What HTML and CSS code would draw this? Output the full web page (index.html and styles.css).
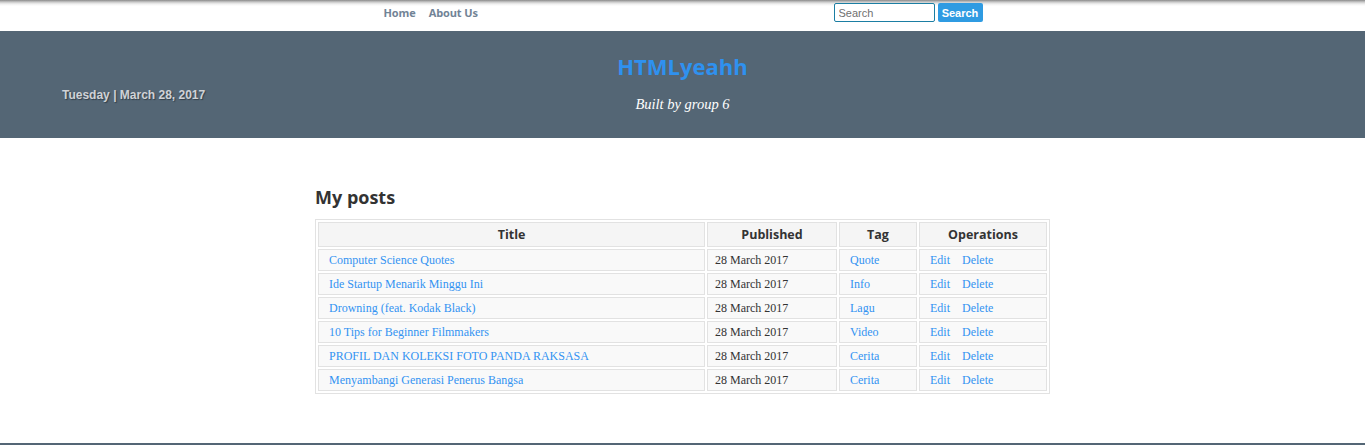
FILE: index.html
```html
<!DOCTYPE html>
<html>
<head>
<meta charset="utf-8">
<title>HTMLyeahh</title>
<link rel="stylesheet" href="styles.css">
</head>
<body>
<nav class="topbar">
  <div class="topbar-inner">
    <ul class="menu">
      <li><a href="#">Home</a></li>
      <li><a href="#">About Us</a></li>
    </ul>
    <form class="search">
      <input class="search-input" type="text" placeholder="Search">
      <button class="search-btn" type="button">Search</button>
    </form>
  </div>
</nav>
<header class="masthead">
  <div class="date">Tuesday | March 28, 2017</div>
  <div class="brand">
    <h1 class="site-title">HTMLyeahh</h1>
    <p class="tagline">Built by group 6</p>
  </div>
  <div></div>
</header>
<main class="content">
  <h2 class="page-title">My posts</h2>
  <table class="posts">
    <colgroup>
      <col class="c-title"><col class="c-pub"><col class="c-tag"><col class="c-ops">
    </colgroup>
    <thead>
      <tr><th>Title</th><th>Published</th><th>Tag</th><th>Operations</th></tr>
    </thead>
    <tbody>
      <tr><td><a href="#">Computer Science Quotes</a></td><td class="pub">28 March 2017</td><td><a href="#">Quote</a></td><td class="ops"><a href="#">Edit</a><a href="#">Delete</a></td></tr>
      <tr><td><a href="#">Ide Startup Menarik Minggu Ini</a></td><td class="pub">28 March 2017</td><td><a href="#">Info</a></td><td class="ops"><a href="#">Edit</a><a href="#">Delete</a></td></tr>
      <tr><td><a href="#">Drowning (feat. Kodak Black)</a></td><td class="pub">28 March 2017</td><td><a href="#">Lagu</a></td><td class="ops"><a href="#">Edit</a><a href="#">Delete</a></td></tr>
      <tr><td><a href="#">10 Tips for Beginner Filmmakers</a></td><td class="pub">28 March 2017</td><td><a href="#">Video</a></td><td class="ops"><a href="#">Edit</a><a href="#">Delete</a></td></tr>
      <tr><td><a href="#">PROFIL DAN KOLEKSI FOTO PANDA RAKSASA</a></td><td class="pub">28 March 2017</td><td><a href="#">Cerita</a></td><td class="ops"><a href="#">Edit</a><a href="#">Delete</a></td></tr>
      <tr><td><a href="#">Menyambangi Generasi Penerus Bangsa</a></td><td class="pub">28 March 2017</td><td><a href="#">Cerita</a></td><td class="ops"><a href="#">Edit</a><a href="#">Delete</a></td></tr>
    </tbody>
  </table>
</main>
<footer class="footer"></footer>
</body>
</html>
```
FILE: styles.css
```css
* { box-sizing: border-box; }
html, body { margin: 0; padding: 0; background: #fff; }
body { font-family: "Liberation Serif", serif; color: #333; }

.topbar {
  height: 31px;
  background: linear-gradient(to bottom, #8a8a8a 0px, #c8c8c8 2px, #f0f0f0 4px, #ffffff 6px);
}
.topbar-inner {
  width: 600px;
  margin: 0 auto;
  display: flex;
  justify-content: space-between;
  align-items: flex-start;
  padding-top: 3px;
}
.menu {
  list-style: none;
  margin: 0;
  padding: 0 0 0 1px;
  display: flex;
  gap: 13px;
}
.menu a {
  font-family: "Open Sans", sans-serif;
  font-weight: 700;
  font-size: 11px;
  color: #718396;
  text-decoration: none;
  letter-spacing: -0.1px;
}
.search { display: flex; gap: 3px; margin: 0; }
.search-input {
  width: 101px;
  height: 19px;
  border: 1px solid #1b7ea3;
  border-radius: 2px;
  padding: 0 4px;
  font-family: "Liberation Sans", sans-serif;
  font-size: 11px;
  color: #333;
}
.search-input::placeholder { color: #707070; }
.search-btn {
  height: 19px;
  width: 45px;
  border: 0;
  border-radius: 2px;
  background: #2f9be2;
  color: #fff;
  font-family: "Liberation Sans", sans-serif;
  font-weight: 700;
  font-size: 11px;
  padding: 0;
}

.masthead {
  height: 107px;
  background: #546675;
  display: grid;
  grid-template-columns: 1fr auto 1fr;
}
.date {
  padding: 57px 0 0 62px;
  font-family: "Liberation Sans", sans-serif;
  font-weight: 700;
  font-size: 12px;
  color: #cfd2d6;
  text-shadow: 1px 1px 1px #33404b;
}
.brand { text-align: center; padding-top: 22px; }
.site-title {
  margin: 0;
  font-family: "Open Sans", sans-serif;
  font-weight: 700;
  font-size: 22px;
  line-height: 26px;
  color: #2f91ef;
}
.tagline {
  margin: 17px 0 0;
  font-family: "Liberation Serif", serif;
  font-style: italic;
  font-size: 14.5px;
  color: #fff;
}

.content {
  width: 735px;
  margin: 0 auto;
  padding-top: 46px;
  padding-bottom: 49px;
}
.page-title {
  margin: 0 0 9px;
  font-family: "Open Sans", sans-serif;
  font-weight: 700;
  font-size: 18px;
  line-height: 26px;
  color: #333;
}
.posts {
  width: 735px;
  border: 1px solid #e2e2e2;
  border-spacing: 2px;
  table-layout: fixed;
}
.c-title { width: 387px; }
.c-pub { width: 130px; }
.c-tag { width: 78px; }
.c-ops { width: 128px; }
.posts th {
  height: 25px;
  background: #f5f5f5;
  border: 1px solid #e2e2e2;
  font-family: "Open Sans", sans-serif;
  font-weight: 700;
  font-size: 12.5px;
  color: #333;
  text-align: center;
  padding: 0;
}
.posts td {
  height: 22px;
  background: #f9f9f9;
  border: 1px solid #e2e2e2;
  font-size: 12px;
  padding: 0 0 0 10px;
  color: #333;
}
.posts td.pub { padding-left: 7px; }
.posts a { color: #3393f2; text-decoration: none; }
.ops a + a { margin-left: 12px; }

.footer { height: 40px; background: #546675; }
```
